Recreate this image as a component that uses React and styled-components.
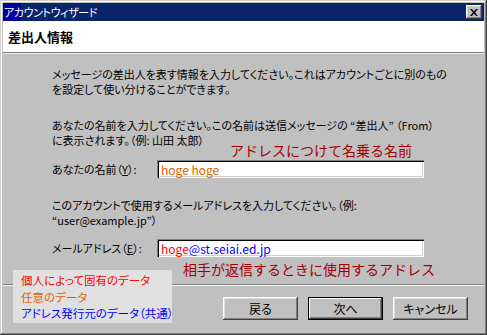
import React from "react";
import styled, { createGlobalStyle } from "styled-components";

const Global = createGlobalStyle`
  html, body { margin: 0; padding: 0; background: #c0c0c0; }
  body { font-family: "Noto Sans CJK JP", "Noto Sans", sans-serif; }
`;

const jp = `"Noto Sans CJK JP", "Noto Sans", sans-serif`;

const Window = styled.div`
  position: relative;
  box-sizing: border-box;
  width: 487px;
  height: 335px;
  padding: 3px;
  background: #c0c0c0;
  display: flex;
  flex-direction: column;
  box-shadow: inset -1px -1px #404040, inset 1px 1px #d4d0c8,
    inset -2px -2px #808080, inset 2px 2px #ffffff;
  font-family: ${jp};
  font-feature-settings: "palt";
`;

const TitleBar = styled.div`
  height: 18px;
  flex: none;
  display: flex;
  align-items: center;
  justify-content: space-between;
  padding: 0 2px 0 1px;
  background: linear-gradient(to right, #00009c 0 18px, #0a246a 18px);
  color: #fff;
  font-size: 11px;
  letter-spacing: -0.4px;
  line-height: 18px;
`;

const TitleText = styled.span`
  white-space: nowrap;
`;

const CloseBtn = styled.div`
  width: 16px;
  height: 14px;
  box-sizing: border-box;
  background: #c0c0c0;
  display: flex;
  align-items: center;
  justify-content: center;
  box-shadow: inset -1px -1px #404040, inset 1px 1px #ffffff,
    inset -2px -2px #808080, inset 2px 2px #d4d0c8;
`;

const Header = styled.div`
  flex: none;
  height: 32px;
  box-sizing: border-box;
  background: #fff;
  border-bottom: 1px solid #808080;
  display: flex;
  align-items: center;
  padding-left: 5px;
  font-size: 13px;
  font-weight: bold;
  color: #000;
`;

const Body = styled.div`
  flex: 1;
  display: flex;
  flex-direction: column;
  padding: 14px 0 0 49px;
  font-size: 11px;
  line-height: 15px;
  color: #000;
  box-shadow: inset 0 1px #e8e8e8;
`;

const Para = styled.div`
  margin-top: ${(p) => p.$mt || 0}px;
`;

const Line = styled.div`
  white-space: nowrap;
`;

const FieldRow = styled.div`
  display: flex;
  align-items: center;
  margin-top: ${(p) => p.$mt || 0}px;
`;

const Label = styled.div`
  width: 105px;
  flex: none;
  white-space: nowrap;
`;

const Input = styled.div`
  width: 267px;
  height: 18px;
  box-sizing: border-box;
  background: #fff;
  padding: 2px 0 0 4px;
  font-size: 12px;
  line-height: 15px;
  white-space: nowrap;
  box-shadow: inset 1px 1px #808080, inset 2px 2px #000,
    inset -1px -1px #ffffff, inset -2px -2px #d4d0c8;
`;

const Ink = styled.span`
  color: ${(p) => p.$c};
`;

const Footer = styled.div`
  flex: none;
  border-top: 1px solid #808080;
  box-shadow: inset 0 1px #ffffff;
  display: flex;
  justify-content: flex-end;
  gap: 10px;
  padding: 12px 16px 12px 0;
`;

const Button = styled.div`
  width: 75px;
  height: 23px;
  box-sizing: border-box;
  display: flex;
  align-items: center;
  justify-content: center;
  font-size: 12px;
  color: #000;
  background: #c0c0c0;
  box-shadow: ${(p) =>
    p.$default
      ? "inset 0 0 0 1px #000, inset -2px -2px #404040, inset 2px 2px #ffffff, inset -3px -3px #808080"
      : "inset -1px -1px #404040, inset 1px 1px #ffffff, inset -2px -2px #808080, inset 2px 2px #dfdfdf"};
`;

const Note = styled.div`
  position: absolute;
  left: ${(p) => p.$x}px;
  top: ${(p) => p.$y}px;
  color: #a00000;
  font-size: 14px;
  line-height: 16px;
  white-space: nowrap;
  font-feature-settings: normal;
`;

const Legend = styled.div`
  position: absolute;
  left: 13px;
  top: 270px;
  width: 159px;
  height: 53px;
  box-sizing: border-box;
  background: #e0e0e0;
  padding: 2px 0 0 8px;
  font-size: 11.5px;
  line-height: 16.5px;
  white-space: nowrap;
`;

const LegendLine = styled.div`
  color: ${(p) => p.$c};
`;

export default function App() {
  return (
    <>
      <Global />
      <Window>
        <TitleBar>
          <TitleText>アカウントウィザード</TitleText>
          <CloseBtn>
            <svg width="8" height="7" viewBox="0 0 8 7">
              <path d="M0 0h2l2 2.5L6 0h2L5 3.5 8 7H6L4 4.5 2 7H0l3-3.5z" fill="#000" />
            </svg>
          </CloseBtn>
        </TitleBar>
        <Header>差出人情報</Header>
        <Body>
          <Para>
            <Line>メッセージの差出人を表す情報を入力してください。これはアカウントごとに別のもの</Line>
            <Line>を設定して使い分けることができます。</Line>
          </Para>
          <Para $mt={21}>
            <Line>あなたの名前を入力してください。この名前は送信メッセージの “差出人” （From）</Line>
            <Line>に表示されます。（例: 山田 太郎）</Line>
          </Para>
          <FieldRow $mt={12}>
            <Label>
              あなたの名前（<u>Y</u>）:
            </Label>
            <Input>
              <Ink $c="#e06000">hoge hoge</Ink>
            </Input>
          </FieldRow>
          <Para $mt={20}>
            <Line>このアカウントで使用するメールアドレスを入力してください。（例:</Line>
            <Line>“user@example.jp”）</Line>
          </Para>
          <FieldRow $mt={11}>
            <Label>
              メールアドレス（<u>E</u>）:
            </Label>
            <Input>
              <Ink $c="#ff0000">hoge</Ink>
              <Ink $c="#0000ff">@st.seiai.ed.jp</Ink>
            </Input>
          </FieldRow>
        </Body>
        <Footer>
          <Button>戻る</Button>
          <Button $default>次へ</Button>
          <Button>キャンセル</Button>
        </Footer>
        <Note $x={230} $y={142}>アドレスにつけて名乗る名前</Note>
        <Note $x={183} $y={261}>相手が返信するときに使用するアドレス</Note>
        <Legend>
          <LegendLine $c="#ff0000">個人によって固有のデータ</LegendLine>
          <LegendLine $c="#e06000">任意のデータ</LegendLine>
          <LegendLine $c="#0000ff">アドレス発行元のデータ（共通）</LegendLine>
        </Legend>
      </Window>
    </>
  );
}
